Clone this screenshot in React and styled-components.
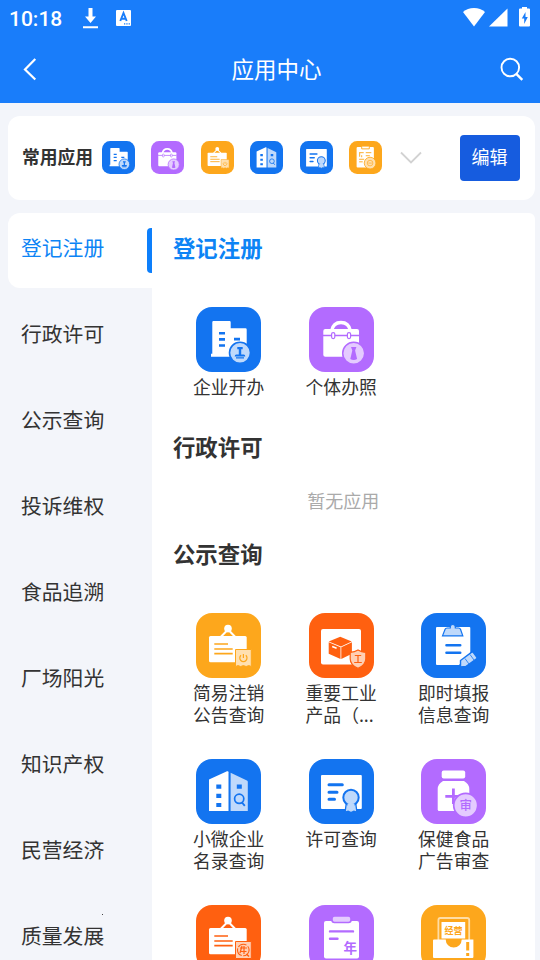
import styled, { createGlobalStyle } from "styled-components";

const GlobalStyle = createGlobalStyle`
  * {
    box-sizing: border-box;
  }
  body {
    margin: 0;
    overflow: hidden;
    background-color: #f3f5fa;
    font-family: "Noto Sans CJK SC", "Noto Sans", sans-serif;
    color: #333;
  }
`;

const Page = styled.div`
  display: flex;
  flex-direction: column;
  width: 540px;
  height: 960px;
  overflow: hidden;
`;
const Header = styled.header`
  flex: none;
  height: 103px;
  background-color: #197dfa;
  color: #fff;
`;
const StatusBar = styled.div`
  display: flex;
  align-items: center;
  height: 36px;
  padding-left: 9px;
  padding-right: 9px;
`;
const Time = styled.span`
  width: 73px;
  font-family: Roboto, sans-serif;
  font-size: 21px;
  font-weight: 500;
  line-height: 36px;
  padding-top: 2px;
`;
const StatusIcons = styled.div`
  display: flex;
  flex: 1;
  padding-top: 1px;
`;
const NavBar = styled.div`
  display: flex;
  justify-content: space-between;
  align-items: center;
  height: 67px;
  padding-left: 20px;
  padding-right: 15px;
  padding-bottom: 2px;
`;
const NavTitle = styled.h1`
  margin: 0;
  padding-left: 16px;
  padding-bottom: 2px;
  font-size: 22.5px;
  font-weight: 400;
  line-height: 32px;
`;
const NavButton = styled.button`
  display: flex;
  padding: 0;
  border: none;
  background: none;
  color: inherit;
`;

const CommonCard = styled.section`
  display: flex;
  align-items: center;
  flex: none;
  height: 84px;
  margin: 13px 5px 13px 8px;
  padding-left: 14px;
  padding-right: 15px;
  border-radius: 12px;
  background-color: #fff;
`;
const CommonTitle = styled.h2`
  width: 80px;
  margin: 0;
  padding-bottom: 5px;
  font-size: 17.8px;
  font-weight: 700;
  line-height: 24px;
  white-space: nowrap;
`;
const CommonList = styled.div`
  display: flex;
  gap: 16.4px;
  padding-bottom: 2px;
`;
const MoreIcon = styled.svg`
  margin-left: 18px;
`;
const EditButton = styled.button`
  width: 60px;
  height: 46px;
  margin-left: auto;
  padding: 0 1px 5px 0;
  border: none;
  border-radius: 4px;
  background-color: #165cdf;
  color: #fff;
  font-family: inherit;
  font-size: 18px;
`;

const Main = styled.main`
  display: flex;
  flex: 1;
  min-height: 0;
  margin-left: 8px;
  margin-right: 5px;
`;
const Sidebar = styled.nav`
  position: relative;
  flex: none;
  width: 144px;
`;
const SidebarItem = styled.div`
  display: flex;
  justify-content: space-between;
  height: 75px;
  margin-bottom: 11px;
  padding-left: 13px;
  border-radius: 12px 0 0 12px;
  background-color: ${(props) => (props.$active ? "#fff" : "transparent")};
  color: ${(props) => (props.$active ? "#0d84f5" : "#333")};
  font-size: 20.8px;
  line-height: 68px;
`;
const ActiveBar = styled.span`
  width: 5px;
  height: 45px;
  margin-top: 15px;
  border-radius: 4px 0 0 4px;
  background-color: #0d7ffb;
`;
const Speck = styled.span`
  position: absolute;
  left: 94px;
  top: 701px;
  width: 1px;
  height: 1px;
  background-color: #444;
`;
const Content = styled.div`
  flex: 1;
  overflow: hidden;
  padding: 19px 24px 0 20.4px;
  border-top-right-radius: 6px;
  background-color: #fff;
`;
const SectionTitle = styled.h2`
  margin: 0 0 ${(props) => (props.$empty ? 28 : 45)}px 0.6px;
  color: ${(props) => (props.$active ? "#0d84f5" : "#333")};
  font-size: 22.4px;
  font-weight: 700;
  line-height: 30px;
`;
const Section = styled.section`
  margin-bottom: ${(props) => (props.$empty ? 27 : 34)}px;
`;
const Empty = styled.p`
  margin: 0;
  padding-left: 3px;
  color: #aaa;
  font-size: 18px;
  line-height: 22px;
  text-align: center;
`;
const AppGrid = styled.div`
  display: grid;
  grid-template-columns: repeat(3, 112.5px);
  row-gap: 34px;
`;
const AppItem = styled.div`
  display: flex;
  flex-direction: column;
  align-items: center;
`;
const AppName = styled.span`
  margin-top: 3px;
  font-size: 17.8px;
  line-height: 22px;
  white-space: pre;
`;
const IconSvg = styled.svg`
  display: block;
  flex: none;
  width: ${(props) => props.$size}px;
  height: ${(props) => props.$size}px;
`;
const IconText = styled.text`
  font-family: "Noto Sans CJK SC", sans-serif;
  font-weight: ${(props) => props.$weight || 700};
  text-anchor: middle;
`;

const BLUE = "#1374f0";
const PURPLE = "#b36bff";
const ORANGE = "#fda71c";
const RED = "#ff6010";

const icons = {
  building: {
    color: BLUE,
    art: (
      <>
        <path fill="#fff" d="M17.5 14h16q1.2 0 1.2 1.2v6.1h14.8q1.2 0 1.2 1.2v27.2H15v-3h1.3V15.2q0-1.2 1.2-1.2z" />
        <path fill={BLUE} d="M23 25h6v2.6h-6zM23 31.1h6v2.6h-6zM23 37.2h6v2.6h-6zM38 30.8h6v2.6h-6z" />
        <circle cx="44" cy="45.8" r="10.5" fill="#bfd9fb" stroke={BLUE} strokeWidth="1.6" />
        <path fill={BLUE} d="M41.3 40h5.4v2.3h-1.5v5.2h2.5q1.6 0 1.6 2H38.7q0-2 1.6-2h2.5v-5.2h-1.5zM40 50.3h8v1.2h-8z" />
      </>
    ),
  },
  briefcase: {
    color: PURPLE,
    art: (
      <>
        <path d="M22.5 24c1-5 4-8.500 9.500-8.500s8.500 3.500 9.500 8.500" fill="none" stroke="#fff" strokeWidth="3.3" />
        <rect x="14.3" y="22" width="35.7" height="27.8" rx="2" fill="#fff" />
        <path d="M14 28.4h36" stroke={PURPLE} strokeWidth="1.5" />
        <rect x="22.6" y="25.6" width="3.2" height="6" rx="1.5" fill="#fff" stroke={PURPLE} strokeWidth="1.2" />
        <rect x="38.4" y="25.6" width="3.2" height="6" rx="1.5" fill="#fff" stroke={PURPLE} strokeWidth="1.2" />
        <circle cx="44.7" cy="46.3" r="11" fill="#e4cbff" stroke={PURPLE} strokeWidth="1.5" />
        <path fill={PURPLE} d="M42 40h5.4l-1.3 3.5 2 8.500q-3.400 2-6.800 0l2-8.500z" />
      </>
    ),
  },
  sign: {
    color: ORANGE,
    art: (
      <>
        <path d="M24.7 24 32 16.5 39.3 24" fill="none" stroke="#fff" strokeWidth="2" />
        <circle cx="32" cy="15.6" r="3.8" fill="#fff" />
        <rect x="13" y="23" width="37.7" height="26.2" rx="1.5" fill="#fff" />
        <path d="M18.3 31H32M18.3 36h18.4M18.3 40.7h18.4" stroke={ORANGE} strokeWidth="1.7" />
        <path d="M39.5 36.5h15.8v17l-2.500-.9-2.700.9-2.700-.9-2.700.9-2.700-.9-2.500.9z" fill="#ffe0b0" stroke={ORANGE} strokeWidth="1" />
        <path d="M45 42.3a3.6 3.6 0 1 0 4.8 0M47.4 41v4" fill="none" stroke={ORANGE} strokeWidth="1.2" />
      </>
    ),
  },
  noticeRed: {
    color: RED,
    art: (
      <>
        <path d="M24.7 24 32 16.5 39.3 24" fill="none" stroke="#fff" strokeWidth="2" />
        <circle cx="32" cy="15.6" r="3.8" fill="#fff" />
        <rect x="13" y="23" width="37.7" height="26.2" rx="1.5" fill="#fff" />
        <path d="M18.3 31H32M18.3 36h18.4M18.3 40.7h18.4" stroke={RED} strokeWidth="1.7" />
        <path d="M39.5 36.5h15.8v17H39.5z" fill="#ffcfb4" stroke={RED} strokeWidth="1" />
        <circle cx="47.3" cy="45" r="5.8" fill="none" stroke={RED} strokeWidth="1.1" strokeDasharray="9 1.5" />
        <path d="m50.5 49 2.5 2.5" stroke={RED} strokeWidth="1.5" />
        <path d="M44 43h7M46 41l-2 7M48 41v8M44.5 46.5h6" stroke={RED} strokeWidth="1.2" />
      </>
    ),
  },
  box: {
    color: RED,
    art: (
      <>
        <rect x="12" y="16" width="40" height="35.5" rx="2" fill="#fff" />
        <path d="m31.2 23.7 11.5 4.8L32 33.5l-12.3-5z" fill={RED} />
        <path d="m19.7 29.3 11.8 4.900V46l-11.800-5.200zM42.900 29.300 32.300 34.200V46l10.600-5.200z" fill={RED} />
        <path d="m23.200 33.500 4.400 1.800" stroke="#fff" strokeWidth="1.500" />
        <path d="M49 37c2.500 1.600 5 2.200 7.800 2.400v6.300c0 4.800-3.600 7.800-7.800 9.700-4.200-1.900-7.800-4.900-7.800-9.700v-6.300c2.800-.2 5.300-.8 7.800-2.400z" fill="#ffcfb4" stroke={RED} strokeWidth="1.2" />
        <path d="M45.800 42.500h6.400M49 42.500v7M45.200 49.500h7.600" stroke={RED} strokeWidth="1.2" />
      </>
    ),
  },
  clipboard: {
    color: BLUE,
    art: (
      <>
        <path d="M16 14h32.3q1 0 1 1v25L38 52H16q-1 0-1-1V15q0-1 1-1z" fill="#fff" />
        <path
          d="m21.5 22.900 2.600-6.600q.5-1.300 2-1.300h3.200v-1.200q0-2.300 2.500-2.300t2.500 2.300V15h3.200q1.500 0 2 1.300l2.300 6.600z"
          fill="#bfd9fb"
          stroke={BLUE}
          strokeWidth="1.2"
        />
        <path d="M25.5 32.200h13.700M25.500 39.800h13.700" stroke={BLUE} strokeWidth="2.600" strokeLinecap="round" />
        <path d="m39.500 47.500 11.200-8.300q1-.6 1.700.3l3.300 4.500q.7 1-.2 1.700L44.800 53.500 39.500 54z" fill="#bfd9fb" stroke={BLUE} strokeWidth="1.4" />
        <path d="m44 45.500 4 5.500M49 41.500l4 5.500" stroke={BLUE} strokeWidth=".8" />
      </>
    ),
  },
  towers: {
    color: BLUE,
    art: (
      <>
        <path d="m13 20.500 18-8.200q1.500-.6 1.500 1V52H13z" fill="#fff" />
        <path d="m34.600 13.700 16.300 7.900q.9.500.9 1.400v29H34.600z" fill="#bfd9fb" />
        <path d="M20.300 25.600h5v4.200h-5zM20.300 34.800h5V39h-5zM20.300 44h5v4h-5zM40.800 25.600h5v4.200h-5z" fill={BLUE} />
        <circle cx="43.2" cy="39.8" r="4.6" fill="none" stroke={BLUE} strokeWidth="1.7" />
        <path d="m46 43.500 2.800 3.300" stroke={BLUE} strokeWidth="1.9" />
      </>
    ),
  },
  certificate: {
    color: BLUE,
    art: (
      <>
        <rect x="12" y="16" width="40.8" height="34" rx="1" fill="#fff" />
        <path d="M20 25.800h13.300M20 33.200h8M20 40.300h5.500" stroke={BLUE} strokeWidth="3" strokeLinecap="round" />
        <path d="m37.300 44-1.200 9.200 3-.9 2.900 1.400 2.900-1.400 3 .9-1.200-9.200z" fill="#bfd9fb" stroke={BLUE} strokeWidth="1.3" />
        <circle cx="42" cy="38.5" r="7.7" fill="#bfd9fb" stroke={BLUE} strokeWidth="2" />
        <path d="m38.600 44.500-.5 5.500h7.800l-.5-5.500z" fill="#bfd9fb" />
      </>
    ),
  },
  jar: {
    color: PURPLE,
    art: (
      <>
        <rect x="20.7" y="11.5" width="23.5" height="8" rx="2" fill="#fff" />
        <path d="M22 22h21q5.300 3 5.300 8v20.500q0 1.500-1.500 1.500H18.200q-1.500 0-1.500-1.500V30q0-5 5.300-8z" fill="#fff" />
        <path d="M24.300 37.300h16M32.400 29.500v15.600" stroke={PURPLE} strokeWidth="2.800" />
        <circle cx="44.7" cy="46.3" r="12" fill="#e4cbff" stroke={PURPLE} strokeWidth="1.7" />
        <IconText x="44.7" y="51" fontSize="12.500" fill={PURPLE} $weight={500}>审</IconText>
      </>
    ),
  },
  annual: {
    color: PURPLE,
    art: (
      <>
        <rect x="15" y="16" width="35" height="37.5" rx="2" fill="#fff" />
        <rect x="23" y="11" width="19" height="6.5" rx="2.5" fill="#e4cbff" stroke={PURPLE} strokeWidth="1.6" />
        <path d="M21 26.400h23M21 33.700h7.500" stroke={PURPLE} strokeWidth="2.400" strokeLinecap="round" />
        <IconText x="41.3" y="48" fontSize="13.5" fill={PURPLE}>年</IconText>
      </>
    ),
  },
  tray: {
    color: ORANGE,
    art: (
      <>
        <path d="M17.400 35V15q0-2 2-2h26.800q2 0 2 2v20" fill="none" stroke="#ffdda5" strokeWidth="1.800" />
        <rect x="20.5" y="17" width="23.7" height="16.5" fill="#fff" />
        <IconText x="32.4" y="28.6" fontSize="9" fill={ORANGE}>经营</IconText>
        <path d="M13 34.500h11.700a8 8 0 0 0 16 0h11.700V52q0 1-1 1H13q-1 0-1-1V35.500q0-1 1-1z" fill="#fff" />
        <path d="M46.700 37v8.500M46.700 48v3" stroke={ORANGE} strokeWidth="3" />
      </>
    ),
  },
  license: {
    color: ORANGE,
    art: (
      <>
        <rect x="15" y="12" width="34" height="40" rx="2" fill="#fff" />
        <path d="M25 11v4.500h15V11" fill="#fff" stroke={ORANGE} strokeWidth="1.800" />
        <path d="M21 22v9M21 23h8M25 28v4M33 23h11M33 29h8M20 36h10M20 41h7" fill="none" stroke={ORANGE} strokeWidth="1.800" />
        <circle cx="41.5" cy="43.5" r="11.5" fill="#ffe0b0" stroke={ORANGE} strokeWidth="1.600" />
        <circle cx="41.5" cy="43.5" r="5.5" fill="none" stroke={ORANGE} strokeWidth="1.300" />
        <path d="M38 43.500h7" stroke={ORANGE} strokeWidth="1.300" />
      </>
    ),
  },
};

const commonApps = ["building", "briefcase", "sign", "towers", "certificate", "license"];

const menus = [
  "登记注册",
  "行政许可",
  "公示查询",
  "投诉维权",
  "食品追溯",
  "厂场阳光",
  "知识产权",
  "民营经济",
  "质量发展",
];

const sections = [
  {
    title: "登记注册",
    apps: [
      { icon: "building", name: "企业开办" },
      { icon: "briefcase", name: "个体办照" },
    ],
  },
  { title: "行政许可", apps: [] },
  {
    title: "公示查询",
    apps: [
      { icon: "sign", name: "简易注销\n公告查询" },
      { icon: "box", name: "重要工业\n产品（..." },
      { icon: "clipboard", name: "即时填报\n信息查询" },
      { icon: "towers", name: "小微企业\n名录查询" },
      { icon: "certificate", name: "许可查询" },
      { icon: "jar", name: "保健食品\n广告审查" },
      { icon: "noticeRed", name: "" },
      { icon: "annual", name: "" },
      { icon: "tray", name: "" },
    ],
  },
];

function AppIcon({ name, size = 65 }) {
  const { color, art } = icons[name];
  return (
    <IconSvg viewBox="0 0 65 65" $size={size}>
      <rect width="65" height="65" rx="16" fill={color} />
      {art}
    </IconSvg>
  );
}

function TopHeader() {
  return (
    <Header>
      <StatusBar>
        <Time>10:18</Time>
        <StatusIcons>
          <svg width="17" height="22" viewBox="0 0 17 22" fill="#fff">
            <path d="M6.500 0h4v8.500H14L8.500 15 3 8.500h3.500zM1 18.300h15v2H1z" />
          </svg>
          <svg width="50" height="22" viewBox="0 0 50 22">
            <rect x="17" y="2" width="15" height="16" rx="1" fill="#fff" />
            <path d="m21.300 13 3.200-8 3.200 8M22.500 10.700h4" fill="none" stroke="#197dfa" strokeWidth="1.900" />
            <path d="M25 15.800h1.300M27.300 15.800h1.300M29.600 15.800h1.300" stroke="#197dfa" strokeWidth="1.200" />
          </svg>
        </StatusIcons>
        <svg width="68" height="22" viewBox="0 0 68 22" fill="#fff">
          <path d="M0 5Q4.500 1 11 1t11 4L11 19.500z" />
          <path d="M44.500 1.500V19.500H26z" />
          <path d="M59 0h5v1.500h2q1 0 1 1v16q0 1-1 1h-9q-1 0-1-1v-16q0-1 1-1h2z" />
          <path d="M62.500 5 58.800 11.500h2.400V17l3.600-7h-2.300z" fill="#197dfa" />
        </svg>
      </StatusBar>
      <NavBar>
        <NavButton type="button">
          <svg width="18" height="24" viewBox="0 0 18 24" fill="none" stroke="#fff" strokeWidth="2.2">
            <path d="M15.300 2 5 12.500l10.300 10" />
          </svg>
        </NavButton>
        <NavTitle>应用中心</NavTitle>
        <NavButton type="button">
          <svg width="26" height="26" viewBox="0 0 26 26" fill="none" stroke="#fff">
            <circle cx="11.3" cy="11.5" r="8.8" strokeWidth="1.9" />
            <path d="m17.300 17.800 6 6" strokeWidth="2.4" />
          </svg>
        </NavButton>
      </NavBar>
    </Header>
  );
}

function App() {
  return (
    <Page>
      <GlobalStyle />
      <TopHeader />
      <CommonCard>
        <CommonTitle>常用应用</CommonTitle>
        <CommonList>
          {commonApps.map((name) => (
            <AppIcon key={name} name={name} size={33} />
          ))}
        </CommonList>
        <MoreIcon width="22" height="14" viewBox="0 0 22 14" fill="none" stroke="#d2d2d2" strokeWidth="1.8">
          <path d="m1 1.500 10 10 10-10" />
        </MoreIcon>
        <EditButton type="button">编辑</EditButton>
      </CommonCard>
      <Main>
        <Sidebar>
          {menus.map((menu, index) => (
            <SidebarItem key={menu} $active={index === 0}>
              {menu}
              {index === 0 && <ActiveBar />}
            </SidebarItem>
          ))}
          <Speck />
        </Sidebar>
        <Content>
          {sections.map((section, index) => {
            const empty = section.apps.length === 0;
            return (
              <Section key={section.title} $empty={empty}>
                <SectionTitle $active={index === 0} $empty={empty}>
                  {section.title}
                </SectionTitle>
                {empty ? (
                  <Empty>暂无应用</Empty>
                ) : (
                  <AppGrid>
                    {section.apps.map((app) => (
                      <AppItem key={app.icon}>
                        <AppIcon name={app.icon} />
                        <AppName>{app.name}</AppName>
                      </AppItem>
                    ))}
                  </AppGrid>
                )}
              </Section>
            );
          })}
        </Content>
      </Main>
    </Page>
  );
}

export default App;
